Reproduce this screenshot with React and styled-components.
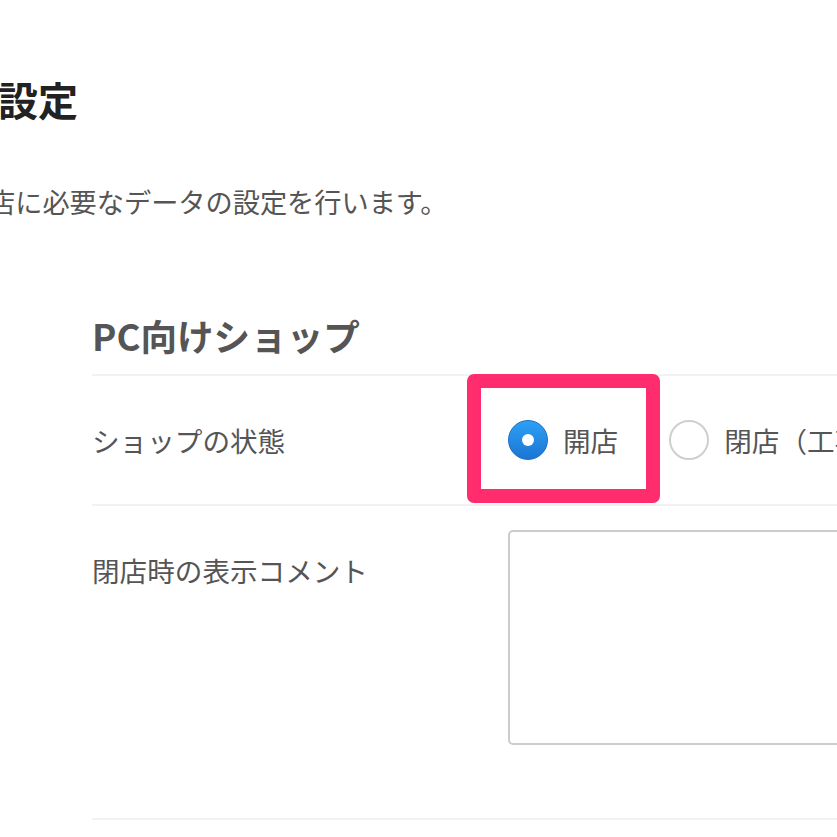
import React, { useState } from 'react';
import styled, { createGlobalStyle } from 'styled-components';

// Estilos globales
const GlobalStyle = createGlobalStyle`
  html, body {
    margin: 0;
    padding: 0;
    background: #fff;
    overflow: hidden;
  }
  body {
    font-family: "Noto Sans CJK JP", "Noto Sans", sans-serif;
  }
`;

const Page = styled.div`
  padding-top: 69px;
  width: 1200px;
`;

const Title = styled.h1`
  margin: 0 0 0 -2px;
  font-size: 40px;
  font-weight: 700;
  line-height: 60px;
  color: #222;
`;

const Lead = styled.p`
  margin: 52px 0 0;
  font-size: 27.2px;
  line-height: 40px;
  color: #555;
  text-indent: -12px;
  white-space: nowrap;
`;

// Bloque de la sección
const Section = styled.section`
  margin: 90px 0 0 92px;
  width: 1100px;
`;

const SectionTitle = styled.h2`
  margin: 0 0 13px;
  font-size: 36.6px;
  font-weight: 700;
  line-height: 50px;
  color: #555;
`;

const Row = styled.div`
  display: grid;
  grid-template-columns: 416px 1fr;
  align-items: ${props => (props.$top ? 'start' : 'center')};
  min-height: ${props => props.$height}px;
  border-top: 2px solid #f2f2f2;
  &:last-child {
    border-bottom: 2px solid #f2f2f2;
  }
`;

const Label = styled.div`
  font-size: 27.6px;
  line-height: 40px;
  color: #555;
  padding-top: ${props => props.$pad || 0}px;
`;

const Field = styled.div`
  position: relative;
  display: flex;
  align-items: center;
  align-self: stretch;
`;

const Option = styled.label`
  display: flex;
  align-items: center;
  gap: 15px;
  margin-right: 51px;
  font-size: 27.6px;
  line-height: 40px;
  color: #555;
  white-space: nowrap;
  cursor: pointer;
`;

const RadioDot = styled.span`
  box-sizing: border-box;
  width: 40px;
  height: 40px;
  border-radius: 50%;
  flex-shrink: 0;
  display: flex;
  align-items: center;
  justify-content: center;
  border: ${props => (props.$on ? '1px solid #1b6fc6' : '2px solid #cfcfcf')};
  background: ${props => (props.$on ? 'linear-gradient(#2da0f6, #1a76d3)' : '#fff')};
  &::after {
    content: '';
    display: ${props => (props.$on ? 'block' : 'none')};
    width: 12px;
    height: 12px;
    border-radius: 50%;
    background: #fff;
  }
`;

// Recuadro de resaltado
const Highlight = styled.div`
  position: absolute;
  box-sizing: border-box;
  left: -41px;
  top: -2px;
  width: 193px;
  height: 129px;
  border: 14px solid #ff2d6e;
  border-radius: 7px;
  pointer-events: none;
`;

const TextBox = styled.textarea`
  box-sizing: border-box;
  display: block;
  margin: 24px 0 73px;
  width: 600px;
  height: 215px;
  border: 2px solid #cccccc;
  border-radius: 5px;
  resize: none;
  outline: none;
  font-family: inherit;
  font-size: 27px;
`;

const App = () => {
  const [estado, setEstado] = useState('open');

  return (
    <>
      <GlobalStyle />
      <Page>
        <Title>設定</Title>
        <Lead>店に必要なデータの設定を行います。</Lead>
        <Section>
          <SectionTitle>PC向けショップ</SectionTitle>
          <Row $height={128}>
            <Label>ショップの状態</Label>
            <Field>
              <Option onClick={() => setEstado('open')}>
                <RadioDot $on={estado === 'open'} />
                開店
              </Option>
              <Option onClick={() => setEstado('closed')}>
                <RadioDot $on={estado === 'closed'} />
                閉店（工事中）
              </Option>
              <Highlight />
            </Field>
          </Row>
          <Row $top>
            <Label $pad={44}>閉店時の表示コメント</Label>
            <div>
              <TextBox />
            </div>
          </Row>
        </Section>
      </Page>
    </>
  );
};

export default App;
